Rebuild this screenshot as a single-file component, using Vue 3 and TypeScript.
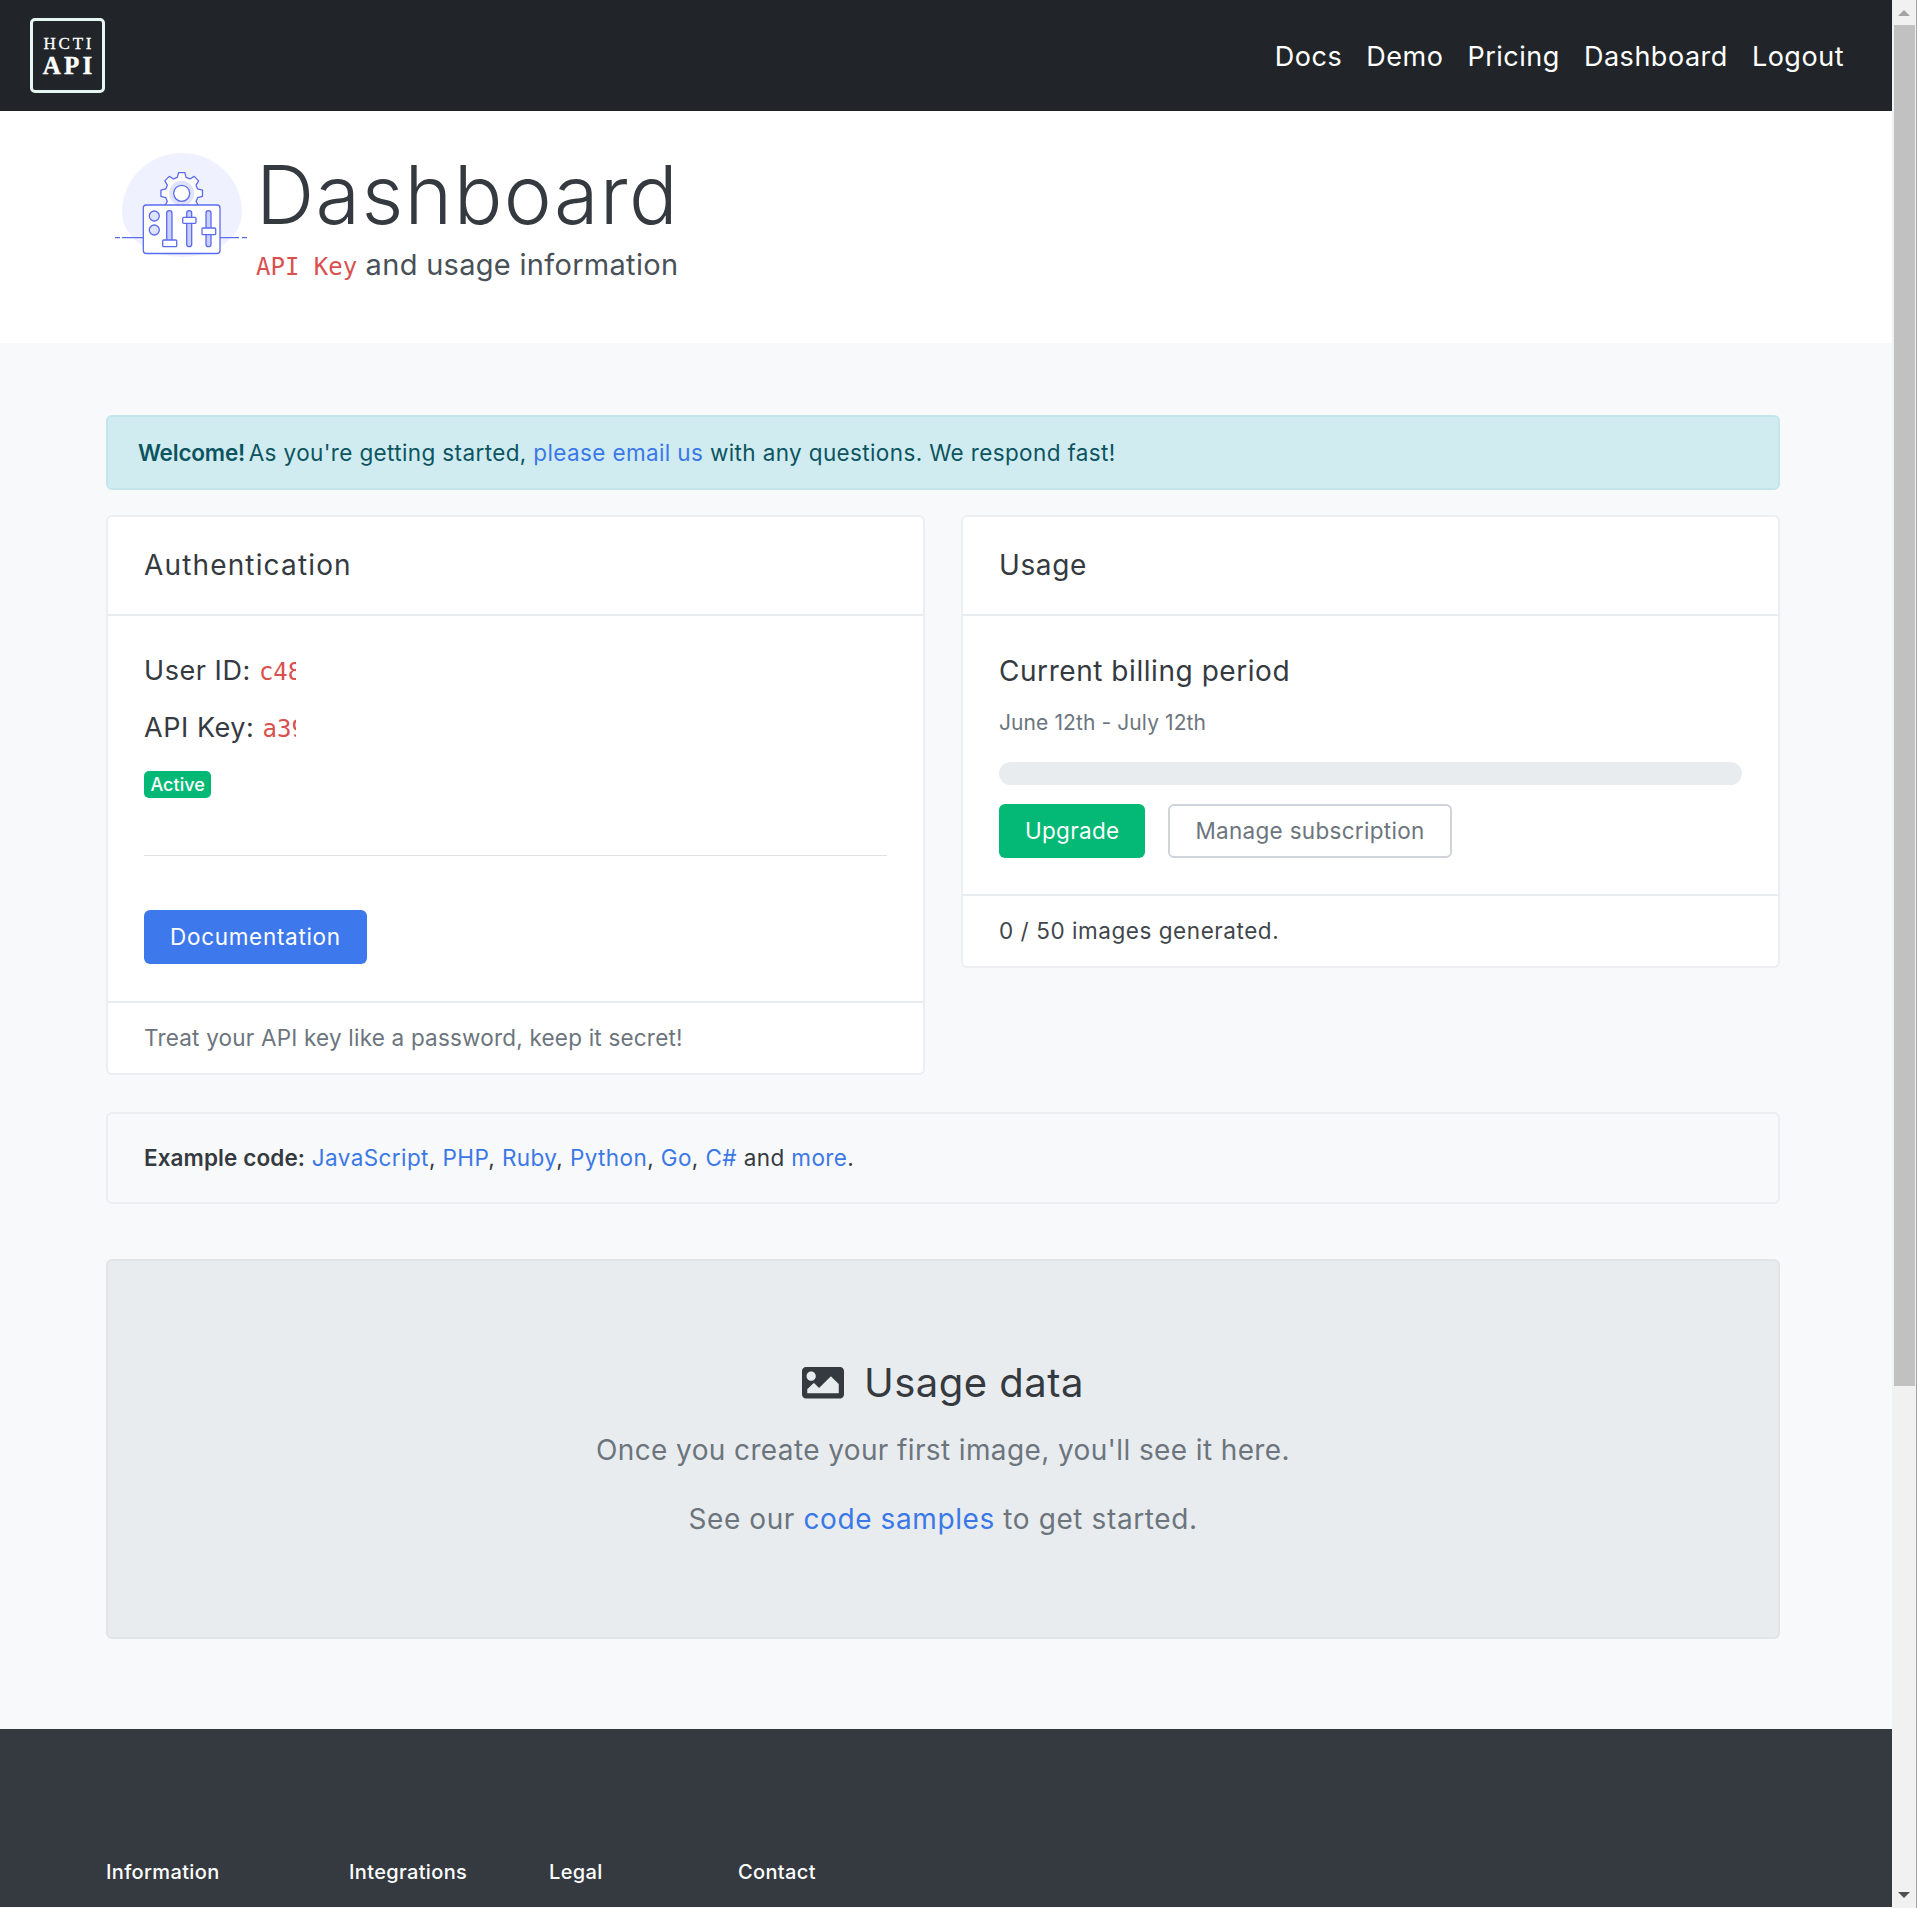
<script setup lang="ts">
const navLinks: string[] = ['Docs', 'Demo', 'Pricing', 'Dashboard', 'Logout']
const samples: string[] = ['JavaScript', 'PHP', 'Ruby', 'Python', 'Go', 'C#']
const footerCols: { label: string; width: number }[] = [
  { label: 'Information', width: 243 },
  { label: 'Integrations', width: 200 },
  { label: 'Legal', width: 189 },
  { label: 'Contact', width: 200 },
]

// Eight-toothed cog outline for the dashboard illustration.
function cogPath(cx: number, cy: number, outer: number, inner: number): string {
  const pts: string[] = []
  for (let i = 0; i < 8; i++) {
    const a = (i * Math.PI) / 4 - Math.PI / 2
    const offsets: [number, number][] = [
      [-0.27, inner],
      [-0.15, outer],
      [0.15, outer],
      [0.27, inner],
    ]
    for (const [d, r] of offsets) {
      pts.push(`${(cx + r * Math.cos(a + d)).toFixed(2)} ${(cy + r * Math.sin(a + d)).toFixed(2)}`)
    }
  }
  return `M${pts.join('L')}Z`
}
const cog = cogPath(181.7, 193.3, 21, 16.5)
</script>

<template>
  <div class="window">
    <div class="page">
      <nav class="navbar">
        <div class="logo">
          <span class="logo-top">HCTI</span>
          <span class="logo-bottom">API</span>
        </div>
        <div class="nav-links">
          <a v-for="link in navLinks" :key="link">{{ link }}</a>
        </div>
      </nav>

      <header class="hero">
        <svg class="hero-icon" viewBox="110 150 140 110" fill="none" stroke="#5b6bf0" stroke-width="1.3">
          <path d="M122 212a60 59 0 0 1 120 0a60 45 0 0 1-120 0z" fill="#eff1ff" stroke="none" />
          <path :d="cog" fill="#fff" stroke-linejoin="round" />
          <circle cx="181.700" cy="193.300" r="12.500" fill="#dfe3fd" stroke="none" />
          <circle cx="181.700" cy="193.300" r="8" fill="#fff" />
          <path d="M115 237.700h5M122 237.700h21M220 237.700h19M242 237.700h5" />
          <rect x="143.300" y="205" width="76.700" height="48.500" rx="3" fill="#fff" />
          <circle cx="154.300" cy="216" r="5" fill="#dfe3fd" />
          <circle cx="154.300" cy="230" r="5" fill="#dfe3fd" />
          <rect x="166.700" y="210.700" width="5.300" height="31" rx="2.600" fill="#c9cfff" />
          <rect x="162.700" y="240" width="14" height="6.700" rx="1" fill="#fff" />
          <rect x="186.700" y="210.700" width="5" height="36" rx="2.500" fill="#c9cfff" />
          <rect x="182.700" y="217.300" width="13.300" height="6" rx="1" fill="#fff" />
          <rect x="206" y="210.700" width="5" height="36" rx="2.500" fill="#c9cfff" />
          <rect x="202" y="228" width="13.700" height="6.700" rx="1" fill="#fff" />
        </svg>
        <div class="hero-text">
          <h1>Dashboard</h1>
          <p><code>API Key</code> and usage information</p>
        </div>
      </header>

      <main class="content">
        <div class="alert">
          <strong>Welcome!</strong> As you're getting started, <a>please email us</a> with any questions. We respond fast!
        </div>

        <div class="cards">
          <section class="card">
            <h2 class="card-header auth-header">Authentication</h2>
            <div class="card-body auth-body">
              <div class="secret">User ID: <code>c48f2a917be04d36</code></div>
              <div class="secret">API Key: <code>a39d71c05ef84b62</code></div>
              <span class="badge">Active</span>
              <hr />
              <button class="btn btn-primary" type="button">Documentation</button>
            </div>
            <div class="card-footer muted">Treat your API key like a password, keep it secret!</div>
          </section>

          <section class="card usage-card">
            <h2 class="card-header">Usage</h2>
            <div class="card-body usage-body">
              <h3>Current billing period</h3>
              <div class="period">June 12th - July 12th</div>
              <div class="progress"></div>
              <div class="actions">
                <button class="btn btn-success" type="button">Upgrade</button>
                <button class="btn btn-outline" type="button">Manage subscription</button>
              </div>
            </div>
            <div class="card-footer">0 / 50 images generated.</div>
          </section>
        </div>

        <div class="examples">
          <strong>Example code:</strong>&nbsp;<template v-for="(s, i) in samples" :key="s"><a>{{ s }}</a><template v-if="i < samples.length - 1">, </template></template> and <a>more</a>.
        </div>

        <div class="jumbo">
          <div class="jumbo-title">
            <svg class="image-icon" viewBox="0 64 512 384" fill="currentColor">
              <path d="M464 448H48c-26.51 0-48-21.49-48-48V112c0-26.51 21.49-48 48-48h416c26.51 0 48 21.49 48 48v288c0 26.51-21.49 48-48 48zM112 120c-30.928 0-56 25.072-56 56s25.072 56 56 56 56-25.072 56-56-25.072-56-56-56zM64 384h384V272l-87.515-87.515c-4.686-4.686-12.284-4.686-16.971 0L208 320l-55.515-55.515c-4.686-4.686-12.284-4.686-16.971 0L64 336v48z" />
            </svg>
            <span>Usage data</span>
          </div>
          <p>Once you create your first image, you'll see it here.</p>
          <p class="jumbo-second">See our <a>code samples</a> to get started.</p>
        </div>
      </main>

      <footer class="footer">
        <div v-for="col in footerCols" :key="col.label" class="footer-col" :style="{ width: col.width + 'px' }">{{ col.label }}</div>
      </footer>
    </div>

    <aside class="scrollbar">
      <div class="arrow arrow-up"></div>
      <div class="thumb"></div>
      <div class="track"></div>
      <div class="arrow arrow-down"></div>
    </aside>
  </div>
</template>

<style scoped>
.window {
  display: flex;
  height: 1908px;
  overflow: hidden;
  font-family: Inter, "Liberation Sans", sans-serif;
  color: #343a40;
}
.page {
  width: 1892px;
  flex: none;
  background: #f8f9fa;
}
a { color: #3b78e7; }
code { font-family: "DejaVu Sans Mono", monospace; color: #d9504f; letter-spacing: 0; }

.navbar {
  height: 111px;
  background: #212529;
  display: flex;
  align-items: center;
  justify-content: space-between;
  padding: 0 48px 0 30px;
}
.logo {
  width: 75px;
  height: 75px;
  box-sizing: border-box;
  border: 3px solid #e6f7f2;
  border-radius: 5px;
  display: flex;
  flex-direction: column;
  align-items: center;
  justify-content: center;
  color: #fff;
  font-family: "Liberation Serif", serif;
}
.logo-top { font-size: 17px; line-height: 21px; letter-spacing: 2.800px; padding-left: 2.800px; -webkit-text-stroke: 0.3px #fff; }
.logo-bottom { font-size: 25px; line-height: 24px; font-weight: 700; letter-spacing: 3.200px; padding-left: 3.200px; -webkit-text-stroke: 0.4px #fff; }
.nav-links { display: flex; gap: 24px; font-size: 27px; letter-spacing: 0.52px; padding-top: 2px; }
.nav-links a { color: #fff; }

.hero {
  height: 232px;
  background: #fff;
  display: flex;
  padding: 29px 0 0 110px;
  box-sizing: border-box;
}
.hero-icon { width: 140px; height: 110px; margin-top: 10px; flex: none; }
.hero-text { margin-left: 6px; }
.hero-text h1 {
  font-size: 81px;
  font-weight: 300;
  line-height: 98px;
  letter-spacing: 1.35px;
  margin: 6px 0 0;
}
.hero-text p {
  font-size: 29px;
  letter-spacing: 0.3px;
  margin: 1px 0 0;
  line-height: 40px;
  color: #495057;
}
.hero-text code { font-size: 24px; }

.content { padding: 72px 112px 90px 106px; }
.alert {
  height: 75px;
  box-sizing: border-box;
  display: flex;
  align-items: center;
  white-space: pre;
  padding: 0 30px;
  background: #d1ecf1;
  border: 2px solid #c2e6ec;
  border-radius: 6px;
  color: #0c5460;
  font-size: 22.5px;
  letter-spacing: 0.37px;
}
.alert strong { font-weight: 600; letter-spacing: -0.2px; margin-right: -3px; }
.cards {
  display: grid;
  grid-template-columns: 1fr 1fr;
  column-gap: 36px;
  align-items: start;
  margin-top: 25px;
}
.card {
  background: #fff;
  border: 2px solid #eceef1;
  border-radius: 6px;
}
.card-header {
  height: 99px;
  box-sizing: border-box;
  margin: 0;
  padding: 0 36px 1px;
  display: flex;
  align-items: center;
  font-size: 28px;
  letter-spacing: 0.6px;
  font-weight: 400;
  border-bottom: 2px solid #e9ecef;
}
.auth-header { letter-spacing: 1.15px; }
.card-body { padding: 0 36px; }
.auth-body { height: 385px; padding-top: 35px; box-sizing: border-box; }
.usage-body { height: 278px; padding-top: 35px; box-sizing: border-box; }
.card-footer {
  height: 72px;
  box-sizing: border-box;
  padding: 0 36px 2px;
  display: flex;
  align-items: center;
  font-size: 22.5px;
  letter-spacing: 0.55px;
  color: #3f464c;
  border-top: 2px solid #e9ecef;
}
.card-footer.muted { color: #6c757d; letter-spacing: 0.2px; }
.secret {
  width: 152px;
  overflow: hidden;
  white-space: nowrap;
  font-size: 27px;
  letter-spacing: 0.55px;
  line-height: 40px;
  margin-bottom: 16px;
}
.secret code { font-size: 24px; }
.badge {
  display: inline-block;
  margin-top: 6px;
  background: #04b875;
  color: #fff;
  font-size: 18px;
  font-weight: 500;
  line-height: 27px;
  padding: 0 6.500px;
  border-radius: 5px;
}
hr {
  border: 0;
  border-top: 1px solid #dee2e6;
  margin: 57px 0 54px;
}
.btn {
  height: 54px;
  box-sizing: border-box;
  padding: 0 25px 1px;
  font: 400 22.5px Inter, "Liberation Sans", sans-serif;
  letter-spacing: 0.3px;
  border-radius: 6px;
  border: 1px solid transparent;
}
.btn-primary { background: #3d78ed; color: #fff; letter-spacing: 0.7px; }
.btn-success { background: #04b875; color: #fff; }
.btn-outline { background: transparent; border: 2px solid #ced4da; color: #6c757d; letter-spacing: 0.3px; }
.usage-body h3 { margin: 0; font-size: 28px; letter-spacing: 0.55px; font-weight: 400; line-height: 40px; }
.period { font-size: 21px; letter-spacing: 0.1px; line-height: 30px; color: #6c757d; margin-top: 17px; }
.progress { height: 23px; border-radius: 12px; background: #e9ecef; margin-top: 24px; }
.actions { display: flex; gap: 23px; margin-top: 19px; }

.examples {
  height: 92px;
  box-sizing: border-box;
  margin-top: 37px;
  padding: 0 36px;
  background: #f8f9fa;
  border: 2px solid #eceef1;
  border-radius: 6px;
  font-size: 22.5px;
  letter-spacing: 0.4px;
  line-height: 88px;
  white-space: pre;
}
.examples strong { font-weight: 600; letter-spacing: 0.1px; }
.jumbo {
  height: 380px;
  box-sizing: border-box;
  margin-top: 55px;
  padding-top: 94px;
  background: #e9ecef;
  border: 2px solid #e1e4e8;
  border-radius: 6px;
  text-align: center;
}
.jumbo-title {
  display: flex;
  justify-content: center;
  align-items: center;
  gap: 20px;
  font-size: 40px;
  letter-spacing: 0.5px;
  line-height: 56px;
}
.image-icon { width: 42px; height: 31.500px; }
.jumbo p { margin: 0; font-size: 28px; letter-spacing: 0.38px; line-height: 42px; color: #6c757d; }
.jumbo-title + p { margin-top: 18px; margin-bottom: 27px; }
.jumbo .jumbo-second { letter-spacing: 0.6px; }

.footer {
  height: 178px;
  box-sizing: border-box;
  background: #343a40;
  display: flex;
  padding: 128px 0 0 106px;
  color: #fff;
  font-size: 20px;
  letter-spacing: 0.35px;
  font-weight: 500;
  line-height: 30px;
}
.footer-col { flex: none; }

.scrollbar {
  width: 25px;
  flex: none;
  box-sizing: border-box;
  display: flex;
  flex-direction: column;
  align-items: center;
  background: #f1f1f1;
  border-right: 1px solid #a3a3a3;
}
.arrow { width: 0; height: 0; flex: none; border-left: 6px solid transparent; border-right: 6px solid transparent; }
.arrow-up { border-bottom: 6px solid #a3a3a3; margin: 10px 0 9px; }
.arrow-down { border-top: 6px solid #505050; margin: 9px 0 10px; }
.thumb { width: 21px; height: 1361px; flex: none; background: #c1c1c1; }
.track { flex: 1; }
</style>

<style>
html, body { margin: 0; background: #f8f9fa; }
</style>
